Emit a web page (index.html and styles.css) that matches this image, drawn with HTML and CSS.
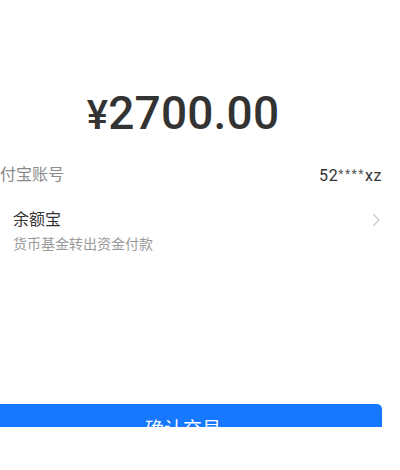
FILE: index.html
```html
<!DOCTYPE html>
<html lang="zh">
<head>
<meta charset="utf-8">
<link rel="stylesheet" href="styles.css">
</head>
<body>
<div class="screen">
  <div class="content">
    <div class="amount"><span class="yen">¥</span>2700.00</div>
    <div class="row account">
      <span class="label">支付宝账号</span>
      <span class="value">52<span class="stars">****</span>xz</span>
    </div>
    <div class="row method">
      <div class="method-text">
        <div class="method-title">余额宝</div>
        <div class="method-sub">货币基金转出资金付款</div>
      </div>
      <svg class="chevron" width="9" height="14" viewBox="0 0 9 14"><path d="M1.5 1.5 L7 7 L1.5 12.5" fill="none" stroke="#c8c8c8" stroke-width="1.3"/></svg>
    </div>
    <div class="spacer"></div>
    <button class="confirm">确认交易</button>
  </div>
</div>
</body>
</html>
```
FILE: styles.css
```css
html, body {
  margin: 0;
  padding: 0;
  background: #fff;
}
body {
  font-family: Roboto, "Noto Sans CJK SC", sans-serif;
  color: #333;
}
.screen {
  width: 400px;
  height: 427px;
  overflow: hidden;
}
.content {
  margin-left: -16px;
  padding-right: 18px;
  padding-top: 86px;
  display: flex;
  flex-direction: column;
}
.amount {
  text-align: center;
  font-size: 46px;
  font-weight: 500;
  line-height: 54px;
  color: #333;
  letter-spacing: 0.2px;
}
.yen {
  font-size: 40px;
}
.row {
  display: flex;
  justify-content: space-between;
  align-items: center;
}
.account {
  margin-top: 20px;
  font-size: 16px;
  line-height: 22px;
}
.label {
  color: #8a8a8a;
}
.value {
  color: #333;
  letter-spacing: 0.6px;
}
.stars {
  font-size: 12px;
  vertical-align: 3px;
  color: #555;
  letter-spacing: 1.5px;
}
.method {
  margin-top: 22px;
  padding-left: 29px;
}
.method-title {
  font-size: 16px;
  line-height: 22px;
  color: #333;
}
.method-sub {
  font-size: 14px;
  line-height: 20px;
  color: #9a9a9a;
  margin-top: 3px;
}
.chevron {
  margin-top: -24px;
  margin-right: 1px;
}
.spacer {
  height: 150px;
}
.confirm {
  border: none;
  background: #1677ff;
  color: #fff;
  font-family: "Noto Sans CJK SC", sans-serif;
  font-size: 19px;
  height: 48px;
  border-radius: 5px;
  padding: 0;
  line-height: 48px;
}
```
